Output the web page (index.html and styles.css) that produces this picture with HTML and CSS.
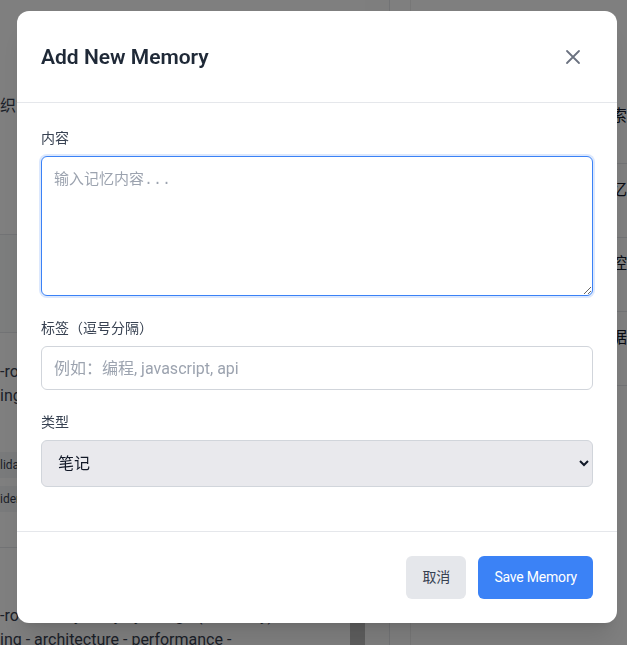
FILE: index.html
```html
<!DOCTYPE html>
<html lang="zh-CN">
<head>
<meta charset="utf-8">
<title>Add New Memory</title>
<link rel="stylesheet" href="styles.css">
</head>
<body>
<div class="page">
  <main class="main">
    <div class="topbar"><span class="crumb">织管理</span></div>
    <div class="hero"></div>
    <div class="band"></div>
    <div class="section">
      <p class="line">-ro memory entry text</p>
      <p class="line">ing - notes - api</p>
      <div class="chips"><span class="chip">lidation</span></div>
      <div class="chips"><span class="chip">identity</span></div>
    </div>
    <div class="section section--last">
      <p class="line">-ro memory entry by design (read only)</p>
      <p class="line">ing - architecture - performance -</p>
    </div>
  </main>
  <div class="scroll"><div class="thumb"></div></div>
  <div class="gutter"></div>
  <aside class="aside">
    <div class="aside-row">检索</div>
    <div class="aside-row">记忆</div>
    <div class="aside-row">监控</div>
    <div class="aside-row">数据</div>
  </aside>
</div>

<div class="overlay">
  <div class="modal" role="dialog" aria-labelledby="modal-title">
    <header class="modal-header">
      <h2 class="modal-title" id="modal-title">Add New Memory</h2>
      <button class="close-btn" type="button" aria-label="Close">
        <svg width="16" height="16" viewBox="0 0 16 16" fill="none" stroke="currentColor" stroke-width="1.8" stroke-linecap="round">
          <path d="M2 2 L14 14 M14 2 L2 14"/>
        </svg>
      </button>
    </header>
    <div class="modal-body">
      <div class="field">
        <label class="field-label" for="content">内容</label>
        <textarea id="content" class="textarea" placeholder="输入记忆内容..." autofocus></textarea>
      </div>
      <div class="field">
        <label class="field-label" for="tags">标签（逗号分隔）</label>
        <input id="tags" class="input" type="text" placeholder="例如：编程, javascript, api">
      </div>
      <div class="field">
        <label class="field-label" for="type">类型</label>
        <select id="type" class="select">
          <option>笔记</option>
          <option>代码</option>
          <option>想法</option>
        </select>
      </div>
    </div>
    <footer class="modal-footer">
      <button class="btn btn-secondary" type="button">取消</button>
      <button class="btn btn-primary" type="button">Save Memory</button>
    </footer>
  </div>
</div>
</body>
</html>
```
FILE: styles.css
```css
* { box-sizing: border-box; }

html, body {
  margin: 0;
  height: 100%;
  overflow: hidden;
}

body {
  font-family: Roboto, "Noto Sans CJK SC", sans-serif;
  color: #1f2937;
  background: #ffffff;
}

/* ---------- background page ---------- */
.page {
  display: grid;
  grid-template-columns: 350px 15px 45px 1fr;
  height: 645px;
}

.main {
  display: flex;
  flex-direction: column;
  overflow: hidden;
}

.topbar {
  flex: none;
  height: 128px;
  padding-top: 92px;
  font-size: 16px;
  color: #374151;
}

.hero {
  flex: none;
  height: 107px;
  border-bottom: 1px solid #e5e7eb;
}

.band {
  flex: none;
  height: 98px;
  background: #f9fafb;
  border-bottom: 1px solid #e5e7eb;
}

.section {
  flex: none;
  padding-top: 27px;
  height: 215px;
  border-bottom: 1px solid #e5e7eb;
}

.section--last {
  padding-top: 56px;
  border-bottom: 0;
}

.line {
  margin: 0;
  font-size: 16px;
  line-height: 24px;
  color: #374151;
  white-space: nowrap;
}

.chips {
  margin-top: 44px;
  height: 26px;
}

.chips + .chips { margin-top: 8px; }

.chip {
  display: inline-block;
  background: #f3f4f6;
  font-size: 12px;
  line-height: 26px;
  color: #374151;
}

.scroll {
  display: flex;
  flex-direction: column;
  justify-content: flex-end;
}

.thumb {
  height: 40px;
  background: #bcbcbc;
}

.gutter {
  border-right: 1px solid #e5e7eb;
  margin-right: 20px;
  background: #fdfdfd;
}

.aside {
  padding-top: 90px;
  display: flex;
  flex-direction: column;
  border-left: 1px solid #eeeeee;
}

.aside-row {
  height: 74px;
  padding-left: 184px;
  padding-top: 12px;
  font-size: 16px;
  color: #111827;
  border-bottom: 1px solid #e5e7eb;
  white-space: nowrap;
}

/* ---------- overlay + modal ---------- */
.overlay {
  position: fixed;
  inset: 0;
  background: rgba(0, 0, 0, 0.5);
  display: flex;
  align-items: flex-start;
  padding: 11px 0 0 17px;
}

.modal {
  width: 600px;
  background: #ffffff;
  border-radius: 12px;
  box-shadow: 0 20px 25px -5px rgba(0,0,0,0.1), 0 8px 10px -6px rgba(0,0,0,0.1);
  overflow: hidden;
}

.modal-header {
  display: flex;
  align-items: center;
  justify-content: space-between;
  padding: 26px 24px 25px;
  border-bottom: 1px solid #e5e7eb;
}

.modal-title {
  margin: 0;
  font-size: 21px;
  line-height: 40px;
  font-weight: 600;
  color: #1f2937;
}

.close-btn {
  width: 40px;
  height: 40px;
  padding: 0;
  border: 0;
  background: transparent;
  color: #6b7280;
  display: flex;
  align-items: center;
  justify-content: center;
  cursor: pointer;
}

.close-btn svg { display: block; }

.modal-body {
  display: flex;
  flex-direction: column;
  gap: 22px;
  padding: 25px 24px 44px;
}

.field {
  display: flex;
  flex-direction: column;
  gap: 8px;
}

.field-label {
  font-size: 14px;
  line-height: 20px;
  color: #374151;
}

.textarea,
.input,
.select {
  width: 100%;
  margin: 0;
  border: 1px solid #d1d5db;
  border-radius: 6px;
  font-size: 16px;
  color: #111827;
}

.textarea {
  display: block;
  height: 140px;
  padding: 13px 12px;
  font-family: "Liberation Mono", "Noto Sans CJK SC", monospace;
  font-size: 15px;
  line-height: 22px;
  border-color: #3b82f6;
  box-shadow: 0 0 0 2px rgba(59, 130, 246, 0.18);
  outline: none;
  resize: both;
}

.textarea:focus { outline: none; }

.input {
  height: 44px;
  padding: 0 12px;
  font-family: inherit;
}

.textarea::placeholder,
.input::placeholder {
  color: #9ca3af;
}

.select {
  height: 47px;
  padding: 0 12px;
  font-family: inherit;
  background-color: #e9e9ed;
  color: #111827;
}

.modal-footer {
  display: flex;
  justify-content: flex-end;
  gap: 12px;
  padding: 24px 24px;
  border-top: 1px solid #e5e7eb;
}

.btn {
  height: 43px;
  padding: 0 16px;
  border: 0;
  border-radius: 6px;
  font-family: inherit;
  font-size: 14px;
  line-height: 19px;
  cursor: pointer;
}

.btn-secondary {
  background: #e5e7eb;
  color: #374151;
}

.btn-primary {
  background: #3b82f6;
  color: #ffffff;
  letter-spacing: -0.2px;
}
```
